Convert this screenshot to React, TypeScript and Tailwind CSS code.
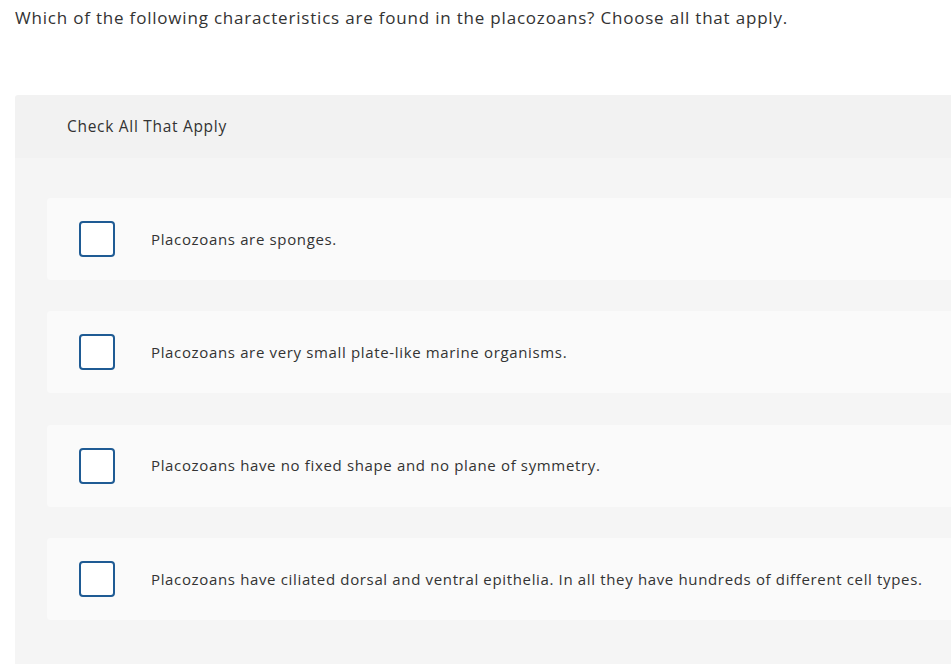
import React from "react";

const options = [
  "Placozoans are sponges.",
  "Placozoans are very small plate-like marine organisms.",
  "Placozoans have no fixed shape and no plane of symmetry.",
  "Placozoans have ciliated dorsal and ventral epithelia. In all they have hundreds of different cell types.",
];

export default function App() {
  return (
    <div className="w-[951px] h-[664px] overflow-hidden bg-white text-[#333333]" style={{ fontFamily: "'Open Sans', sans-serif" }}>
      <div className="pl-[15px] pt-[7px] h-[95px] text-[17px] leading-[22px] tracking-[0.8px]">
        Which of the following characteristics are found in the placozoans? Choose all that apply.
      </div>
      <div className="ml-[15px] rounded-tl-[3px] overflow-hidden">
        <div className="h-[63px] bg-[#f2f2f2] flex items-center pl-[52px] text-[15.5px] tracking-[0.7px]">
          Check All That Apply
        </div>
        <div className="bg-[#f5f5f5] pt-[40px] pl-[32px] pb-[60px] flex flex-col gap-[31.33px]">
          {options.map((o) => (
            <label key={o} className="h-[82px] bg-[#fafafa] rounded-l-[4px] flex items-center pl-[32px]">
              <span className="w-[36px] h-[36px] border-2 border-[#1f5b94] rounded-[4px] bg-white shrink-0" />
              <span className="ml-[36px] text-[15px] tracking-[0.65px]">{o}</span>
            </label>
          ))}
        </div>
      </div>
    </div>
  );
}
